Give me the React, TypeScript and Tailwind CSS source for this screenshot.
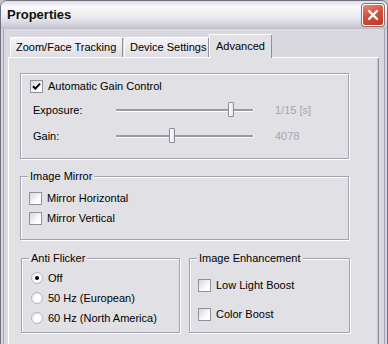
import type { ReactNode } from "react";

const panelBg = "bg-[#e1e0e5]";

function CheckBox({ checked = false }: { checked?: boolean }) {
  return (
    <span className="flex h-[13px] w-[13px] shrink-0 items-center justify-center border border-[#8f8f9e] bg-[linear-gradient(135deg,#d6d6dc,#ffffff_70%)]">
      {checked && (
        <svg width="9" height="9" viewBox="0 0 9 9">
          <path d="M1 4.2 L3.4 6.6 L8 1.6" fill="none" stroke="#000" strokeWidth="2" />
        </svg>
      )}
    </span>
  );
}

function Radio({ checked = false }: { checked?: boolean }) {
  return (
    <span className="flex h-[12px] w-[12px] shrink-0 items-center justify-center rounded-full border border-[#b4b4bf] bg-[radial-gradient(circle_at_65%_65%,#ffffff_40%,#dcdce2)]">
      {checked && <span className="h-[4px] w-[4px] rounded-full bg-black" />}
    </span>
  );
}

function Group({
  label,
  className,
  children,
}: {
  label?: string;
  className: string;
  children: ReactNode;
}) {
  return (
    <div
      className={`relative border border-[#a3a3b0] shadow-[1px_1px_0_#fff,inset_1px_1px_0_#fff] ${className}`}
    >
      {label && (
        <span className={`absolute top-[-8px] left-[7px] px-[2px] leading-[14px] ${panelBg}`}>
          {label}
        </span>
      )}
      {children}
    </div>
  );
}

function Slider({ pos }: { pos: number }) {
  return (
    <div className="relative h-[16px] w-[137px]">
      <div className="absolute top-[7px] left-0 h-[2px] w-full bg-[#9a9aa7] shadow-[0_1px_0_#fff,1px_0_0_#fff]" />
      <div
        className="absolute top-0 h-[15px] w-[6px] rounded-[1px] border border-[#8a8a98] bg-[linear-gradient(90deg,#ffffff,#e4e4ea)]"
        style={{ left: pos }}
      />
    </div>
  );
}

function SliderRow({ label, pos, value, className }: { label: string; pos: number; value: string; className: string }) {
  return (
    <div className={`ml-[3px] flex h-[16px] items-center ${className}`}>
      <span className="w-[83px]">{label}</span>
      <Slider pos={pos} />
      <span className="ml-[22px] text-[#a5a5ad]">{value}</span>
    </div>
  );
}

export default function App() {
  return (
    <div className="h-[344px] w-[388px] overflow-hidden bg-[#c4c4cc] font-['Liberation_Sans',Arial,sans-serif] text-[11px] text-black">
      <div className="flex h-[360px] flex-col rounded-t-[7px] border border-[#70707f] bg-[#d9d8de]">
        {/* title bar */}
        <div className="flex h-[28px] items-center justify-between rounded-t-[6px] bg-[linear-gradient(180deg,#dcdce5_0%,#fafafc_22%,#ebebf1_55%,#d2d2dd_85%,#bcbccb_100%)] pr-[3px] pl-[6px]">
          <span className="text-[13px] font-bold text-[#111]">Properties</span>
          <span className="flex h-[22px] w-[22px] items-center justify-center rounded-[3px] border border-white bg-[linear-gradient(160deg,#ea8a78,#d4503c_45%,#bd3726)] shadow-[0_0_0_1px_#9a6a6a]">
            <svg width="12" height="12" viewBox="0 0 12 12">
              <path d="M2 2 L10 10 M10 2 L2 10" stroke="#fff" strokeWidth="2.4" strokeLinecap="round" />
            </svg>
          </span>
        </div>

        {/* body */}
        <div className="mx-[2px] flex flex-1 flex-col border-x border-[#a2a2b2] pr-[5px] pl-[4px]">
          {/* tabs */}
          <div className="relative z-10 flex h-[28px] items-end pl-[2px]">
            <div className="flex h-[20px] w-[113px] items-center border-t border-l border-white bg-[linear-gradient(#f4f4f7,#dedde3)] pl-[5px] shadow-[inset_-1px_0_0_#8e8e9c]">
              Zoom/Face Tracking
            </div>
            <div className="ml-[1px] flex h-[20px] w-[85px] items-center border-t border-l border-white bg-[linear-gradient(#f4f4f7,#dedde3)] pl-[5px] shadow-[inset_-1px_0_0_#8e8e9c]">
              Device Settings
            </div>
            <div
              className={`-mb-px flex h-[24px] w-[63px] items-start border-t border-l border-white pt-[3px] pl-[6px] shadow-[inset_-1px_0_0_#8e8e9c] ${panelBg}`}
            >
              Advanced
            </div>
          </div>

          {/* panel */}
          <div
            className={`flex flex-1 flex-col border-t border-l border-white pt-[15px] pl-[11px] shadow-[inset_-1px_0_0_#8e8e9c,inset_-2px_0_0_#c6c6d0] ${panelBg}`}
          >
            <Group className="h-[86px] w-[329px] pt-[6px] pl-[9px]">
              <div className="flex h-[13px] items-center gap-[5px]">
                <CheckBox checked />
                <span>Automatic Gain Control</span>
              </div>
              <SliderRow className="mt-[9px]" label="Exposure:" pos={112} value="1/15 [s]" />
              <SliderRow className="mt-[10px]" label="Gain:" pos={53} value="4078" />
            </Group>

            <Group label="Image Mirror" className="mt-[17px] flex h-[64px] w-[329px] flex-col gap-[7px] pt-[15px] pl-[8px]">
              <div className="flex h-[13px] items-center gap-[5px]">
                <CheckBox />
                <span>Mirror Horizontal</span>
              </div>
              <div className="flex h-[13px] items-center gap-[5px]">
                <CheckBox />
                <span>Mirror Vertical</span>
              </div>
            </Group>

            <div className="mt-[18px] ml-[1px] flex gap-[9px]">
              <Group label="Anti Flicker" className="flex h-[75px] w-[159px] flex-col gap-[8px] pt-[13px] pl-[9px]">
                {["Off", "50 Hz (European)", "60 Hz (North America)"].map((t, i) => (
                  <div key={t} className="flex h-[12px] items-center gap-[5px]">
                    <Radio checked={i === 0} />
                    <span>{t}</span>
                  </div>
                ))}
              </Group>
              <Group label="Image Enhancement" className="flex h-[75px] w-[161px] flex-col gap-[16px] pt-[20px] pl-[8px]">
                <div className="flex h-[13px] items-center gap-[5px]">
                  <CheckBox />
                  <span>Low Light Boost</span>
                </div>
                <div className="flex h-[13px] items-center gap-[5px]">
                  <CheckBox />
                  <span>Color Boost</span>
                </div>
              </Group>
            </div>
          </div>
        </div>
      </div>
    </div>
  );
}
